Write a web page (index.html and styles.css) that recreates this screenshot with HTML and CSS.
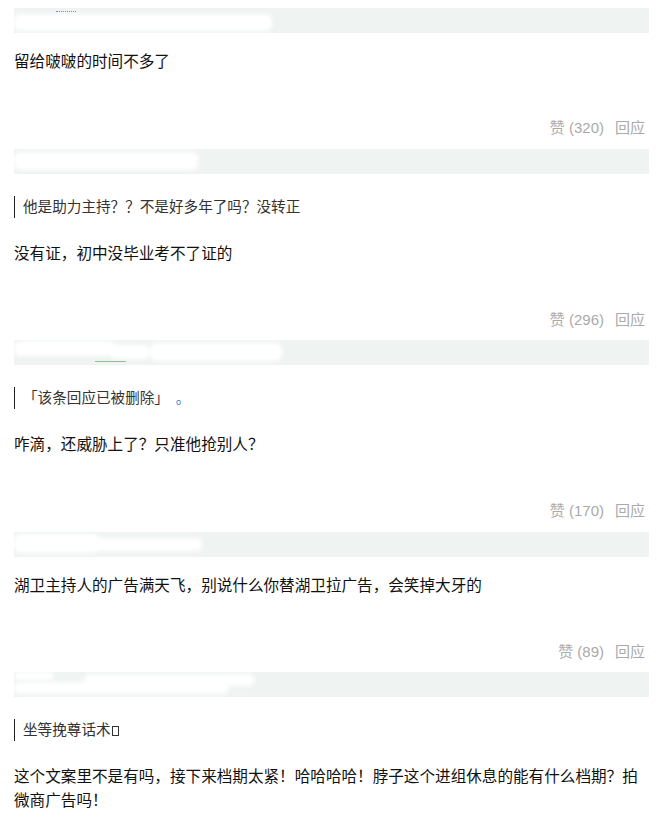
FILE: index.html
```html
<!DOCTYPE html>
<html lang="zh-CN">
<head>
    <meta charset="UTF-8">
    <meta name="viewport" content="width=device-width, initial-scale=1.0">
    <title>回应</title>
    <link rel="stylesheet" href="styles.css">
</head>
<body>
    <div class="comment-list">

        <div class="comment">
            <div class="comment-head">
                <span class="blot" style="left: 0; top: 6px; width: 258px; height: 17px;"></span>
                <span class="name-bits" style="left: 42px;"></span>
            </div>
            <div class="comment-body">
                <p class="comment-text">留给啵啵的时间不多了</p>
            </div>
            <div class="comment-foot">
                <span class="vote">赞 (320)</span>
                <span class="reply">回应</span>
            </div>
        </div>

        <div class="comment">
            <div class="comment-head">
                <span class="blot" style="left: 0; top: 3px; width: 184px; height: 18px;"></span>
            </div>
            <div class="comment-body">
                <div class="quote">他是助力主持？？不是好多年了吗？没转正</div>
                <p class="comment-text">没有证，初中没毕业考不了证的</p>
            </div>
            <div class="comment-foot">
                <span class="vote">赞 (296)</span>
                <span class="reply">回应</span>
            </div>
        </div>

        <div class="comment">
            <div class="comment-head">
                <span class="blot" style="left: 0; top: 1px; width: 102px; height: 15px;"></span>
                <span class="blot" style="left: 96px; top: 5px; width: 40px; height: 14px;"></span>
                <span class="blot" style="left: 136px; top: 3px; width: 132px; height: 18px;"></span>
                <span class="name-line" style="left: 81px; width: 31px;"></span>
            </div>
            <div class="comment-body">
                <div class="quote">「该条回应已被删除」<span class="quote-dot">。</span></div>
                <p class="comment-text">咋滴，还威胁上了？只准他抢别人？</p>
            </div>
            <div class="comment-foot">
                <span class="vote">赞 (170)</span>
                <span class="reply">回应</span>
            </div>
        </div>

        <div class="comment">
            <div class="comment-head">
                <span class="blot" style="left: 0; top: 2px; width: 86px; height: 19px;"></span>
                <span class="blot" style="left: 80px; top: 6px; width: 108px; height: 13px;"></span>
            </div>
            <div class="comment-body">
                <p class="comment-text">湖卫主持人的广告满天飞，别说什么你替湖卫拉广告，会笑掉大牙的</p>
            </div>
            <div class="comment-foot">
                <span class="vote">赞 (89)</span>
                <span class="reply">回应</span>
            </div>
        </div>

        <div class="comment">
            <div class="comment-head">
                <span class="blot" style="left: 0; top: 0; width: 40px; height: 8px;"></span>
                <span class="blot" style="left: 70px; top: 2px; width: 170px; height: 12px;"></span>
                <span class="blot" style="left: 0; top: 10px; width: 215px; height: 12px;"></span>
            </div>
            <div class="comment-body">
                <div class="quote">坐等挽尊话术<span class="tofu"></span></div>
                <p class="comment-text">这个文案里不是有吗，接下来档期太紧！哈哈哈哈！脖子这个进组休息的能有什么档期？拍微商广告吗！</p>
            </div>
        </div>

    </div>
</body>
</html>
```

FILE: styles.css
```css
body {
    margin: 0;
    background-color: #fff;
    color: #111;
    font-family: "Liberation Sans", "Noto Sans CJK SC", sans-serif;
}
.comment-list {
    padding: 8px 8px 0 14px;
}
.comment-head {
    position: relative;
    height: 25px;
    background-color: #eff4f2;
    overflow: hidden;
}
.blot {
    position: absolute;
    background-color: #fff;
    border-radius: 6px;
    filter: blur(2px);
}
.name-bits {
    position: absolute;
    top: 3px;
    width: 20px;
    height: 2px;
    border-top: 1px dotted #6a8fc4;
}
.name-line {
    position: absolute;
    top: 21px;
    height: 1px;
    background-color: #8cc08c;
}
.comment-body {
    padding-top: 17px;
}
.quote {
    margin: 5px 0 24px;
    padding-left: 8px;
    border-left: 1px solid #222;
    font-size: 14.6px;
    line-height: 22px;
    color: #333;
}
.quote-dot {
    margin-left: 14px;
    color: #3a7bc8;
}
.tofu {
    display: inline-block;
    width: 5px;
    height: 8px;
    margin-left: 1px;
    border: 1px solid #333;
    vertical-align: -1px;
}
.comment-text {
    margin: 0;
    font-size: 15.6px;
    line-height: 24px;
    color: #111;
}
.comment-foot {
    display: flex;
    justify-content: flex-end;
    gap: 11px;
    margin: 42px 0 8.5px;
    padding-right: 4px;
    font-size: 15px;
    line-height: 24px;
    color: #aaa;
}
```
